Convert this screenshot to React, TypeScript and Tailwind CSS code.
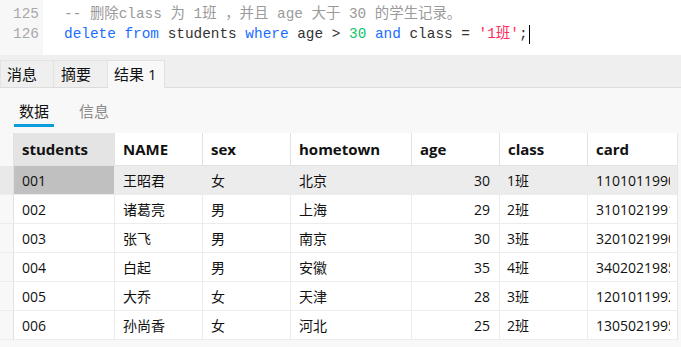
import { Fragment } from "react";

type Row = {
  id: string;
  name: string;
  sex: string;
  hometown: string;
  age: number;
  cls: string;
  card: string;
};

const rows: Row[] = [
  { id: "001", name: "王昭君", sex: "女", hometown: "北京", age: 30, cls: "1班", card: "110101199003157654" },
  { id: "002", name: "诸葛亮", sex: "男", hometown: "上海", age: 29, cls: "2班", card: "310102199104262354" },
  { id: "003", name: "张飞", sex: "男", hometown: "南京", age: 30, cls: "3班", card: "320102199003047654" },
  { id: "004", name: "白起", sex: "男", hometown: "安徽", age: 35, cls: "4班", card: "340202198505177654" },
  { id: "005", name: "大乔", sex: "女", hometown: "天津", age: 28, cls: "3班", card: "120101199206137654" },
  { id: "006", name: "孙尚香", sex: "女", hometown: "河北", age: 25, cls: "2班", card: "130502199506137654" },
];

const sans = "font-['Segoe_UI','Open_Sans','Noto_Sans_CJK_SC',sans-serif]";
const mono = "font-['Liberation_Mono','Noto_Sans_CJK_SC',monospace]";

function Editor() {
  return (
    <div className={`flex h-[55px] bg-white text-[14.4px] leading-[20px] ${mono}`}>
      <div className="flex w-[43px] flex-col items-end bg-[#f7f7f7] pt-[4px] pr-[4px] text-[#a8a8a8]">
        <div>125</div>
        <div>126</div>
      </div>
      <div className="flex flex-col pt-[4px] pl-[21px] text-[#333]">
        <div className="text-[#9a9a9a]">-- 删除class 为 1班 ，并且 age 大于 30 的学生记录。</div>
        <div className="flex items-center whitespace-pre">
          <span className="text-[#1a6dff]">delete from</span>
          <span> students </span>
          <span className="text-[#1a6dff]">where</span>
          <span> age &gt; </span>
          <span className="text-[#11c26d]">30</span>
          <span> </span>
          <span className="text-[#1a6dff]">and</span>
          <span> class = </span>
          <span className="text-[#ff2a5c]">'1班'</span>
          <span>;</span>
          <span className="ml-[1px] h-[19px] w-[1px] bg-black" />
        </div>
      </div>
    </div>
  );
}

function Tabs() {
  return (
    <div className={`flex h-[33px] items-end border-b border-[#dcdcdc] bg-[#efefef] text-[15px] text-[#111] ${sans}`}>
      <div className="flex h-[27px] w-[54px] items-center border-t border-r border-l border-[#e2e2e2] pl-[6px]">消息</div>
      <div className="flex h-[27px] w-[54px] items-center border-t border-r border-[#e2e2e2] pl-[7px]">摘要</div>
      <div className="-mb-px flex h-[28px] w-[57px] items-center border-t border-r border-[#e0e0e0] bg-[#f8f8f8] pl-[6px]">
        结果 1
      </div>
    </div>
  );
}

function SubTabs() {
  return (
    <div className={`flex h-[45px] items-start gap-[25px] px-[14px] pt-[12px] text-[15px] ${sans}`}>
      <div className="flex w-[40px] flex-col items-center gap-[2px]">
        <span className="leading-[22px] text-[#111]">数据</span>
        <span className="h-[3px] w-full bg-[#0b9de0]" />
      </div>
      <span className="leading-[22px] text-[#8a8a8a]">信息</span>
    </div>
  );
}

const cols = ["students", "NAME", "sex", "hometown", "age", "class", "card"];

function DataGrid() {
  return (
    <div className={`flex ${sans}`}>
      <div className="grid grid-cols-[13px_102px_88px_88px_121px_88px_88px_89px] border-r border-[#e6e6e6]">
        <div className="h-[33px] bg-[#f8f8f8]" />
        {cols.map((c, i) => (
          <div
            key={c}
            className={`flex h-[33px] items-center border-b border-[#e2e2e2] pl-[8px] text-[15px] font-bold text-[#111] ${
              i === 0 ? "border-r border-l bg-[#e4e4e4]" : "bg-white"
            } ${i > 0 && i < cols.length - 1 ? "border-r" : ""}`}
          >
            {c}
          </div>
        ))}
        {rows.map((r, idx) => {
          const sel = idx === 0;
          const cell = `flex h-[29px] items-center overflow-hidden whitespace-nowrap border-b border-[#ececec] text-[14px] text-[#111] ${
            sel ? "bg-[#ececec]" : "bg-white"
          }`;
          return (
            <Fragment key={r.id}>
              <div className={`h-[29px] border-b border-[#ececec] ${sel ? "bg-[#e9e9e9]" : "bg-[#f8f8f8]"}`} />
              <div
                className={`${cell} border-r border-l border-l-[#e2e2e2] pl-[8px] ${sel ? "!bg-[#c0c0c0]" : ""}`}
              >
                {r.id}
              </div>
              <div className={`${cell} border-r pl-[8px]`}>{r.name}</div>
              <div className={`${cell} border-r pl-[8px]`}>{r.sex}</div>
              <div className={`${cell} border-r pl-[8px]`}>{r.hometown}</div>
              <div className={`${cell} border-r justify-end pr-[9px]`}>{r.age}</div>
              <div className={`${cell} border-r pl-[7px]`}>{r.cls}</div>
              <div className={`${cell} pr-[7px] pl-[8px]`}>
                <span className="block min-w-0 overflow-hidden">{r.card}</span>
              </div>
            </Fragment>
          );
        })}
      </div>
    </div>
  );
}

export default function App() {
  return (
    <div className="h-[347px] w-[681px] overflow-hidden bg-[#f8f8f8]">
      <Editor />
      <Tabs />
      <SubTabs />
      <DataGrid />
    </div>
  );
}
